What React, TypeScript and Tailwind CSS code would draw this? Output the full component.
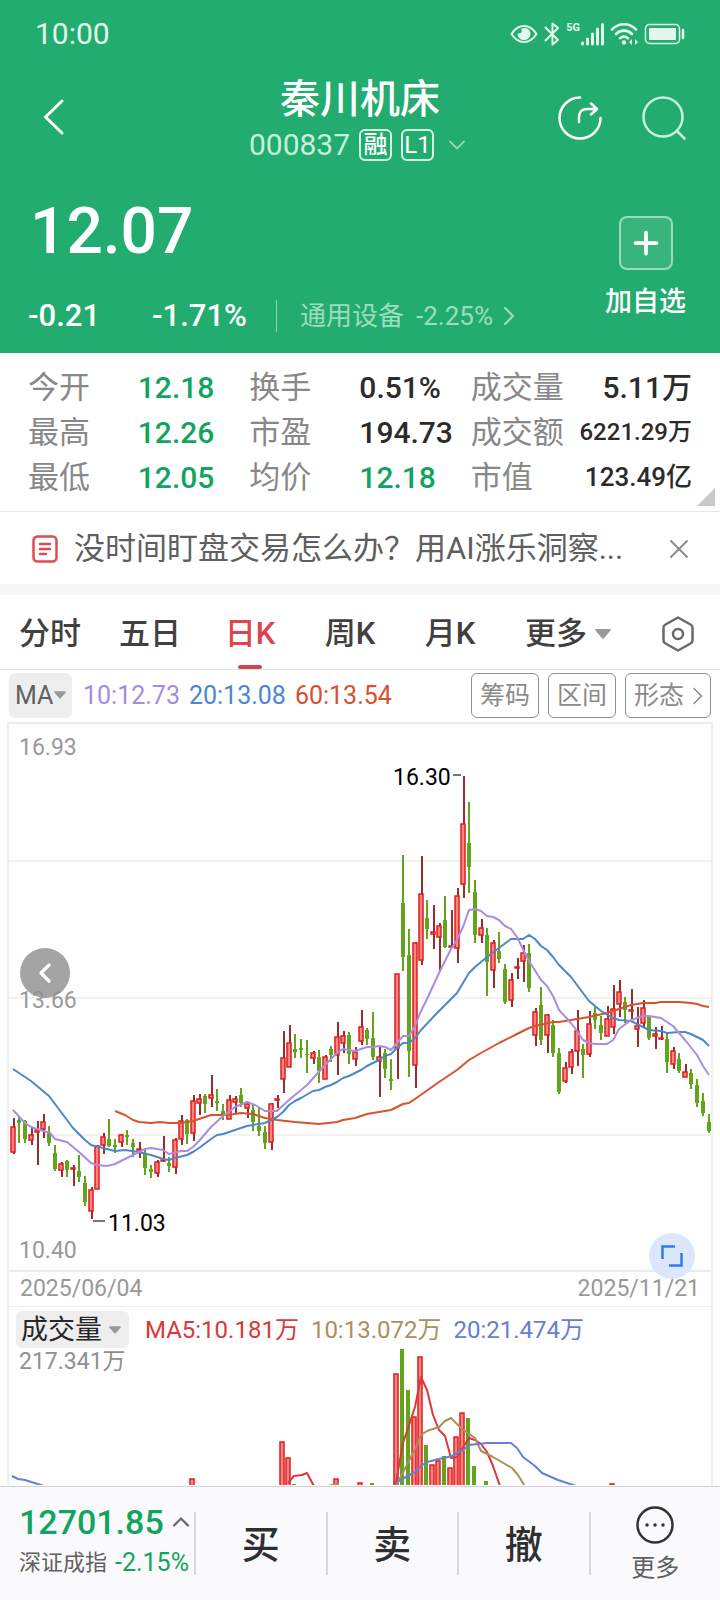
import { ChevronDown, ChevronLeft, ChevronRight, ChevronUp, Plus, X } from 'lucide-react';

type Candle = ['R' | 'G', number, number, number, number];

// 方向, 最高, 实体上沿, 实体下沿, 最低
const CANDLES: Candle[] = [
  ['R', 394, 403, 428, 430], ['G', 393, 396, 399, 419], ['G', 396, 397, 415, 419], ['R', 403, 411, 416, 421],
  ['R', 397, 406, 408, 441], ['R', 390, 398, 405, 414], ['G', 402, 408, 419, 422], ['G', 421, 429, 445, 447],
  ['R', 438, 440, 446, 453], ['G', 436, 437, 446, 453], ['R', 441, 444, 445, 462], ['G', 431, 447, 453, 458],
  ['G', 452, 459, 478, 482], ['R', 463, 466, 487, 495], ['R', 421, 422, 465, 465], ['R', 409, 413, 421, 430],
  ['G', 395, 415, 422, 423], ['G', 415, 421, 423, 429], ['R', 410, 411, 418, 423], ['G', 406, 411, 413, 421],
  ['G', 415, 419, 423, 433], ['R', 418, 425, 426, 434], ['G', 424, 429, 444, 451], ['G', 441, 445, 448, 454],
  ['R', 436, 438, 449, 453], ['R', 412, 436, 437, 438], ['G', 433, 439, 442, 448], ['R', 414, 416, 443, 450],
  ['R', 391, 397, 415, 421], ['G', 395, 396, 410, 420], ['R', 371, 377, 409, 417], ['R', 370, 375, 379, 391],
  ['G', 370, 372, 380, 389], ['R', 351, 371, 374, 383], ['G', 365, 377, 379, 387], ['G', 380, 387, 390, 396],
  ['R', 371, 376, 395, 395], ['R', 372, 375, 378, 389], ['G', 364, 371, 379, 383], ['R', 379, 380, 384, 394],
  ['G', 380, 386, 398, 407], ['G', 383, 402, 407, 412], ['G', 402, 408, 419, 425], ['R', 379, 380, 418, 426],
  ['R', 371, 375, 376, 384], ['R', 307, 334, 355, 369], ['R', 301, 319, 343, 343], ['G', 310, 325, 328, 334],
  ['G', 315, 324, 326, 334], ['G', 316, 330, 331, 349], ['R', 327, 329, 334, 340], ['G', 326, 333, 347, 359],
  ['R', 331, 333, 355, 355], ['G', 322, 325, 331, 338], ['R', 298, 313, 331, 351], ['R', 307, 312, 319, 329],
  ['G', 308, 311, 330, 340], ['R', 323, 328, 335, 342], ['R', 286, 303, 317, 321], ['G', 304, 306, 315, 321],
  ['G', 288, 314, 333, 336], ['R', 322, 333, 337, 373], ['G', 325, 329, 345, 354], ['G', 335, 355, 357, 366],
  ['R', 250, 250, 324, 355], ['G', 131, 179, 233, 247], ['G', 205, 231, 327, 353], ['R', 218, 219, 341, 364],
  ['R', 132, 170, 236, 241], ['G', 176, 194, 205, 215], ['R', 181, 208, 210, 225], ['R', 199, 202, 213, 248],
  ['G', 172, 196, 223, 224], ['R', 186, 222, 223, 223], ['R', 164, 172, 224, 239], ['R', 52, 100, 160, 174],
  ['G', 78, 119, 143, 169], ['G', 156, 168, 211, 219], ['R', 195, 204, 211, 219], ['G', 204, 211, 238, 272],
  ['R', 216, 219, 246, 264], ['G', 208, 227, 235, 239], ['G', 240, 245, 278, 280], ['R', 249, 256, 276, 283],
  ['R', 234, 243, 244, 255], ['R', 221, 229, 237, 258], ['G', 220, 229, 264, 268], ['R', 284, 288, 311, 322],
  ['G', 263, 281, 316, 321], ['R', 290, 291, 311, 329], ['G', 296, 301, 329, 333], ['G', 324, 329, 368, 370],
  ['R', 338, 344, 357, 359], ['R', 325, 328, 343, 350], ['R', 286, 307, 327, 342], ['G', 320, 325, 331, 354],
  ['R', 287, 300, 330, 333], ['G', 283, 289, 296, 305], ['G', 292, 301, 309, 316], ['R', 282, 295, 312, 312],
  ['R', 261, 285, 303, 310], ['R', 256, 268, 280, 293], ['G', 273, 278, 286, 299], ['R', 265, 286, 287, 295],
  ['R', 283, 302, 305, 323], ['R', 276, 284, 299, 303], ['G', 291, 293, 314, 316], ['R', 303, 310, 312, 325],
  ['R', 302, 314, 315, 316], ['G', 309, 315, 338, 349], ['R', 323, 327, 340, 345], ['G', 329, 335, 347, 349],
  ['R', 340, 348, 353, 353], ['G', 345, 349, 360, 365], ['G', 355, 361, 379, 383], ['G', 369, 377, 389, 392],
  ['G', 390, 398, 407, 409],
];

const MA10 =
  '13,386 25,399 31,403 37,405 50,409 55,415 67,418 79,428 91,439 97,441 107,442 115,440 127,434 139,428 145,425 151,424 163,426 169,430 181,427 187,427 193,423 199,417 211,403 223,392 235,383 247,378 255,381 265,387 277,387 289,376 307,361 325,341 337,329 343,325 355,327 367,323 373,323 379,322 385,323 391,326 403,312 409,312 415,302 421,287 427,275 439,249 451,225 457,216 463,203 469,186 475,185 481,187 487,192 493,193 499,196 505,202 511,205 517,213 523,225 529,237 541,256 547,262 553,272 559,286 571,299 577,307 583,316 589,319 595,320 607,320 613,316 619,305 631,296 643,292 649,292 661,294 673,302 685,316 697,331 703,342 709,351';
const MA20 =
  '13,345 31,357 49,372 67,396 73,404 85,416 91,421 103,424 115,427 125,426 139,428 151,431 163,435 169,436 175,434 187,431 193,428 199,424 211,415 217,411 223,410 235,406 247,402 265,399 271,396 277,393 283,388 289,381 295,377 301,374 313,367 319,366 325,363 331,361 337,358 343,354 349,352 361,346 367,342 379,336 385,332 391,330 397,324 403,319 409,319 415,314 421,306 439,287 451,275 457,269 463,259 469,249 475,243 487,233 499,224 511,215 523,215 529,211 535,215 541,222 547,226 553,233 559,241 571,253 577,261 583,269 589,277 601,287 613,294 619,296 631,297 637,300 649,306 661,307 667,309 679,308 685,308 691,310 703,316 709,322';
const MA60 =
  '115,387 125,391 133,396 139,398 151,399 160,398 169,399 181,399 193,397 211,391 228,391 241,389 253,390 265,394 277,396 295,398 319,400 337,398 343,396 355,394 367,390 391,386 403,380 409,379 415,375 439,358 457,346 469,336 481,329 499,319 517,310 529,304 535,302 553,298 559,298 577,295 589,293 607,289 619,285 631,281 643,279 655,279 661,278 679,278 691,279 697,280 703,282 709,283';

// 序号, 方向, 柱顶
const VOLUMES: [number, 'R' | 'G', number][] = [
  [30, 'R', 131], [45, 'R', 94], [46, 'R', 110], [47, 'G', 136], [54, 'R', 131], [58, 'R', 135], [60, 'G', 135],
  [64, 'R', 26], [65, 'G', 1], [66, 'G', 42], [67, 'R', 69], [68, 'R', 9], [69, 'G', 97], [70, 'R', 117],
  [71, 'R', 113], [72, 'G', 108], [73, 'R', 120], [74, 'R', 89], [75, 'R', 65], [76, 'G', 70], [77, 'G', 118],
  [79, 'G', 133], [100, 'R', 136],
];

const VOL_LINES = [
  { color: '#d63a3a', points: '288,135 294,128 302,127 307,125 315,140' },
  { color: '#d63a3a', points: '395,140 403,95 415,59 421,29 427,42 433,67 439,82 445,88 451,110 457,109 469,90 475,92 481,96 487,104 493,118 500,138 501,142' },
  { color: '#ad8f5c', points: '318,140 337,136 342,140' },
  { color: '#ad8f5c', points: '396,138 415,101 421,87 427,83 439,79 445,73 451,70 462,81 475,90 481,103 493,109 512,120 518,127 526,140' },
  { color: '#6480d2', points: '12,128 18,131 25,132 44,138 48,140' },
  { color: '#6480d2', points: '396,135 404,130 415,124 421,118 427,114 439,111 452,108 463,102 469,97 487,95 511,95 517,100 523,109 535,118 542,125 558,132 576,138 580,140' },
];

const xOf = (i: number) => 13 + i * 6;

function StatusBar() {
  return (
    <div className="flex h-[68px] items-center justify-between pl-[35px] pr-[34px] text-[#e3f7ed]">
      <span className="text-[30px] leading-9">10:00</span>
      <div className="flex items-center gap-[6px]">
        <svg className="h-6 w-7" viewBox="0 0 28 24" fill="none" stroke="currentColor" strokeWidth="2">
          <path d="M1.5 12C5 6.500 9 4 14 4s9 2.500 12.500 8C23 17.500 19 20 14 20S5 17.500 1.500 12z" />
          <path d="M11 7.500c1.200 1.500 1 3-.5 3.500-1.300.4-2.500 0-3 1 0 3.500 3 6 6.500 6s6.500-2.600 6.500-6-2.700-6-6-6c-1.500 0-2.700.5-3.500 1.500z" fill="currentColor" stroke="none" />
        </svg>
        <svg className="h-6 w-4" viewBox="0 0 16 24" fill="none" stroke="currentColor" strokeWidth="2">
          <path d="M1.500 5.500l12.500 12.500L8.500 22.500v-21l5.500 4.500L1.500 18.500" strokeLinejoin="round" strokeLinecap="round" />
        </svg>
        <div className="flex">
          <span className="text-[11px] leading-3 font-bold">5G</span>
          <svg className="h-6 w-6" viewBox="0 0 24 24" stroke="currentColor" strokeWidth="3" strokeLinecap="round">
            <path d="M2.500 21v1M7.500 17v5M12.500 12v10M17.500 7v15M22.500 2.500v19.500" />
          </svg>
        </div>
        <svg className="h-6 w-7" viewBox="0 0 28 24" fill="none" stroke="currentColor" strokeWidth="2.600" strokeLinecap="round">
          <path d="M2 7.500C8.500 0.500 19.500 0.500 26 7.500M6 12c4.500-4.500 11.500-4.500 16 0M10 16.200c2.500-2 5.500-2 8 0" />
          <circle cx="14" cy="20.500" r="2.200" fill="currentColor" stroke="none" />
          <path d="M19 20l3-3v6zM28 20l-3-3v6z" fill="currentColor" stroke="none" />
        </svg>
        <svg className="h-6 w-[42px]" viewBox="0 0 42 24" fill="none" stroke="currentColor">
          <rect x="1.500" y="2.500" width="34" height="19" rx="4" strokeWidth="1.500" />
          <rect x="5" y="6" width="27" height="12" rx="1" fill="currentColor" stroke="none" />
          <path d="M39 8v8" strokeWidth="2.500" strokeLinecap="round" />
        </svg>
      </div>
    </div>
  );
}

function Header() {
  return (
    <header className="bg-[#22ac6f] text-white">
      <StatusBar />
      <div className="grid grid-cols-[1fr_auto_1fr] items-center py-[7px] pl-[34px] pr-[34px]">
        <button aria-label="返回" className="justify-self-start">
          <svg className="h-10 w-10" viewBox="0 0 40 40" fill="none" stroke="currentColor" strokeWidth="3">
            <path d="M28 3L11.500 19 28 35" strokeLinecap="round" strokeLinejoin="round" />
          </svg>
        </button>
        <div className="flex flex-col items-center gap-1">
          <h1 className="text-[40px] leading-[50px] font-medium">秦川机床</h1>
          <button className="flex h-8 items-center gap-[9px] text-[#c5f0dc]">
            <span className="text-[30px] leading-8">000837</span>
            <span className="flex h-8 w-[33px] items-center justify-center rounded-md border-2 border-[#d5f5e5] text-2xl leading-7 font-medium text-white">
              融
            </span>
            <span className="flex h-8 w-[33px] items-center justify-center rounded-md border-2 border-[#d5f5e5] text-2xl leading-7 text-white">
              L1
            </span>
            <ChevronDown className="h-7 w-7 text-[#a3dcc0]" strokeWidth={1.5} />
          </button>
        </div>
        <div className="flex items-center gap-10 justify-self-end">
          <button aria-label="分享">
            <svg className="h-11 w-11" viewBox="0 0 44 44" fill="none" stroke="currentColor" strokeWidth="2.500" strokeLinecap="round" strokeLinejoin="round">
              <path d="M22 1.500A20.500 20.500 0 1 0 42.500 22" />
              <path d="M21 26v-5c0-5 3-8 8-8h9M33 7.500l6 5.500-6 5.500" />
            </svg>
          </button>
          <button aria-label="搜索">
            <svg className="h-11 w-11" viewBox="0 0 44 44" fill="none" stroke="#c9f1df" strokeWidth="2.500" strokeLinecap="round">
              <circle cx="21" cy="21" r="19.500" />
              <path d="M35.500 35.500L42.500 42.500" />
            </svg>
          </button>
        </div>
      </div>
      <div className="flex items-start justify-between pt-7 pr-[34px] pb-[21px] pl-7">
        <div>
          <div className="pl-[2px] text-[64px] leading-[72px] font-medium">12.07</div>
          <div className="mt-8 flex h-8 items-center text-[31px] leading-8">
            <span className="w-[124px] font-medium">-0.21</span>
            <span className="w-[124px] font-medium">-1.71%</span>
            <button className="flex items-center gap-3 border-l border-white/50 pl-[23px] text-[26px] leading-8 text-[#9fdcbd]">
              <span>通用设备</span>
              <span className="flex items-center">
                -2.25%
                <ChevronRight className="h-8 w-8" strokeWidth={1.5} />
              </span>
            </button>
          </div>
        </div>
        <button className="mt-5 flex flex-col items-center gap-[14px]">
          <span className="flex h-[54px] w-[54px] items-center justify-center rounded-lg border-2 border-white/50 bg-white/10">
            <Plus className="h-9 w-9" strokeWidth={2.500} />
          </span>
          <span className="text-[27px] leading-9 font-medium">加自选</span>
        </button>
      </div>
    </header>
  );
}

function Quotes() {
  return (
    <dl className="relative grid grid-cols-3 border-b border-[#e6e6e6] px-7 pt-3 pb-[11px] text-[30px] leading-[45px] text-[#2b2b2b]">
      <Quote label="今开" className="justify-between pr-[35px] text-[#12a45f]" value="12.18" />
      <Quote label="换手" labelClass="w-[110px]" value="0.51%" />
      <Quote label="成交量" className="justify-between" value="5.11万" />
      <Quote label="最高" className="justify-between pr-[35px] text-[#12a45f]" value="12.26" />
      <Quote label="市盈" labelClass="w-[110px]" value="194.73" />
      <Quote label="成交额" className="justify-between" valueClass="text-2xl leading-[45px]" value="6221.29万" />
      <Quote label="最低" className="justify-between pr-[35px] text-[#12a45f]" value="12.05" />
      <Quote label="均价" labelClass="w-[110px]" className="text-[#12a45f]" value="12.18" />
      <Quote label="市值" className="justify-between" valueClass="text-[26px]" value="123.49亿" />
      <svg className="absolute right-[5px] bottom-[5px] h-[18px] w-[18px]" viewBox="0 0 18 18">
        <path d="M18 0v18H0z" fill="#c9c9c9" />
      </svg>
    </dl>
  );
}

interface QuoteProps {
  label: string;
  value: string;
  className?: string;
  labelClass?: string;
  valueClass?: string;
}

function Quote({ label, value, className = '', labelClass = '', valueClass = '' }: QuoteProps) {
  return (
    <div className={`flex h-[45px] items-center ${className}`}>
      <dt className={`shrink-0 text-[31px] text-[#888888] ${labelClass}`}>{label}</dt>
      <dd className={`font-medium whitespace-nowrap ${valueClass}`}>{value}</dd>
    </div>
  );
}

function News() {
  return (
    <div className="flex h-[72px] items-center pt-[2px] pr-[25px] pl-8">
      <svg className="h-7 w-[26px] shrink-0" viewBox="0 0 26 28" fill="none" stroke="#e04b52" strokeWidth="2.500" strokeLinecap="round">
        <rect x="1.500" y="1.500" width="23" height="25" rx="4" />
        <path d="M8 9h10M8 14h10M8 19h6" />
      </svg>
      <a href="#news" className="ml-4 flex-1 text-[31px] leading-10 whitespace-nowrap text-[#5f5f5f]">
        没时间盯盘交易怎么办？用AI涨乐洞察...
      </a>
      <button aria-label="关闭">
        <X className="h-8 w-8 text-[#8a8a8a]" strokeWidth={1.500} />
      </button>
    </div>
  );
}

function Triangle({ className }: { className: string }) {
  return (
    <svg className={className} viewBox="0 0 16 10" fill="#999999">
      <path d="M1 0h14q1.500 0 .5 1.500L9 9.300q-1 1-2 0L.5 1.500Q-.5 0 1 0z" />
    </svg>
  );
}

function Tabs() {
  return (
    <nav className="grid h-[75px] grid-cols-[repeat(5,100fr)_136fr_84fr] border-b border-[#e2e2e2] pt-[3px] text-[31px] leading-10 font-medium text-[#404040]">
      <button>分时</button>
      <button>五日</button>
      <button className="relative text-[#e0434b]">
        日K
        <span className="absolute bottom-0 left-1/2 h-1 w-6 -translate-x-1/2 rounded-full bg-[#d9434d]" />
      </button>
      <button>周K</button>
      <button>月K</button>
      <button className="flex items-center justify-center gap-2">
        更多
        <Triangle className="h-[10px] w-4" />
      </button>
      <button aria-label="设置" className="flex items-center justify-center">
        <svg className="h-9 w-9" viewBox="0 0 36 36" fill="none" stroke="#6a6a6a" strokeWidth="2.500" strokeLinejoin="round">
          <path d="M18 1.500l12.500 7q2 1 2 3v13q0 2-2 3L18 34.500l-12.500-7q-2-1-2-3v-13q0-2 2-3z" />
          <circle cx="18" cy="18" r="5" />
        </svg>
      </button>
    </nav>
  );
}

function Indicators() {
  return (
    <div className="flex items-center justify-between pt-[3px] pr-[9px] pb-1 pl-[9px] text-[25px] leading-8">
      <div className="flex items-center gap-[9px]">
        <div className="relative mr-[2px] h-[45px] w-[63px]">
          <select aria-label="主图指标" className="h-full w-full appearance-none rounded-md bg-[#eeeeee] pl-[6px] text-[25px] text-[#606060]">
            <option>MA</option>
          </select>
          <Triangle className="pointer-events-none absolute top-[18px] right-[6px] h-2 w-3" />
        </div>
        <span className="text-[#a78be0]">10:12.73</span>
        <span className="text-[#4b86cf]">20:13.08</span>
        <span className="text-[#d8502f]">60:13.54</span>
      </div>
      <div className="flex gap-[9px] text-[#8b8b8b]">
        <button className="h-[45px] w-[68px] rounded-md border border-[#8f8f8f]">筹码</button>
        <button className="h-[45px] w-[68px] rounded-md border border-[#8f8f8f]">区间</button>
        <button className="flex h-[45px] w-[86px] items-center rounded-md border border-[#8f8f8f] pl-2 whitespace-nowrap">
          <span className="shrink-0">形态</span>
          <svg className="ml-2 h-[18px] w-[11px] shrink-0" viewBox="0 0 11 18" fill="none" stroke="currentColor" strokeWidth="1.500">
            <path d="M1.500 1L9.500 9l-8 8" />
          </svg>
        </button>
      </div>
    </div>
  );
}

function PriceChart() {
  return (
    <div className="relative border-y-2 border-[#ececec]">
      <svg className="block w-full" viewBox="9 0 702 546" fill="none">
        {[137, 274, 411].map((y) => (
          <path key={y} d={`M9 ${y}h702`} stroke="#f1f1f1" strokeWidth="2" />
        ))}
        {CANDLES.map(([dir, high, top, bottom, low], i) => {
          const x = xOf(i);
          const h = Math.max(bottom - top, 1);
          return dir === 'R' ? (
            <g key={i}>
              <path d={`M${x + 1} ${high}V${low}`} stroke="#932f2f" strokeWidth="2" />
              <rect x={x - 2} y={top} width="4" height={h} fill="#f98585" stroke="#e01c1c" strokeWidth="1.500" />
            </g>
          ) : (
            <g key={i}>
              <path d={`M${x} ${high}V${low}`} stroke="#62a41c" strokeWidth="2" />
              <rect x={x - 2} y={top} width="4" height={h} fill="#62a41c" />
            </g>
          );
        })}
        <g strokeWidth="2" strokeLinejoin="round">
          <polyline points={MA60} stroke="#d6532f" />
          <polyline points={MA20} stroke="#4d87cb" />
          <polyline points={MA10} stroke="#a98de0" />
        </g>
        <path d="M453 51h8M93 497h12" stroke="#777777" strokeWidth="2" />
        <g fontSize="23" fill="#000000">
          <text x="393" y="61">16.30</text>
          <text x="108" y="507">11.03</text>
        </g>
        <g fontSize="23" fill="#999999">
          <text x="19" y="31">16.93</text>
          <text x="19" y="284">13.66</text>
          <text x="19" y="534">10.40</text>
        </g>
      </svg>
      <button aria-label="更早" className="absolute top-[224px] left-[11px] flex h-[50px] w-[50px] items-center justify-center rounded-full bg-[#8d8d8d]/80 text-white">
        <ChevronLeft className="h-8 w-8" strokeWidth={2.500} />
      </button>
      <button aria-label="全屏" className="absolute right-4 -bottom-[9px] z-10 flex h-[46px] w-[46px] items-center justify-center rounded-full bg-[#dbe7fc]">
        <svg className="h-6 w-6" viewBox="0 0 24 24" fill="none" stroke="#2f7de6" strokeWidth="2.500">
          <path d="M2.500 15V2.500H15M21.500 9v12.500H9" />
        </svg>
      </button>
    </div>
  );
}

function VolumeChart() {
  return (
    <>
      <div className="flex items-center gap-3 pt-1 pl-[7px] text-2xl leading-8">
        <div className="relative mr-1 h-[37px] w-[113px]">
          <select aria-label="副图指标" className="h-full w-full appearance-none rounded-md bg-[#eeeeee] pl-[5px] text-[27px] text-[#262626]">
            <option>成交量</option>
          </select>
          <Triangle className="pointer-events-none absolute top-[15px] right-2 h-2 w-3" />
        </div>
        <span className="text-[#d63a3a]">MA5:10.181万</span>
        <span className="text-[#ad8f5c]">10:13.072万</span>
        <span className="text-[#6480d2]">20:21.474万</span>
      </div>
      <svg className="block w-full" viewBox="9 0 702 137" fill="none">
        <text x="19" y="21" fontSize="23" fill="#8f8f8f">217.341万</text>
        {VOLUMES.map(([i, dir, top]) =>
          dir === 'R' ? (
            <rect key={i} x={xOf(i) - 3} y={top} width="4" height="150" fill="#f98585" stroke="#e01c1c" strokeWidth="1.500" />
          ) : (
            <rect key={i} x={xOf(i) - 3} y={top} width="4" height="150" fill="#62a41c" />
          ),
        )}
        {VOL_LINES.map((line) => (
          <polyline key={line.points} points={line.points} stroke={line.color} strokeWidth="2" strokeLinejoin="round" />
        ))}
      </svg>
    </>
  );
}

function BottomBar() {
  return (
    <footer className="flex h-[114px] border-t border-[#d2d2d4] bg-[#fafafc] text-[#2f2f2f]">
      <button className="flex w-[194px] shrink-0 flex-col items-start pt-3 pl-[19px] text-left">
        <span className="flex items-center gap-[3px] text-[34px] leading-[46px] font-medium text-[#12a45f]">
          12701.85
          <ChevronUp className="h-7 w-7 text-[#6a6a6a]" strokeWidth={2} />
        </span>
        <span className="flex items-center gap-[8px] text-[25px] leading-9 whitespace-nowrap text-[#12a45f]">
          <span className="text-[22px] text-[#606060]">深证成指</span>-2.15%
        </span>
      </button>
      <div className="grid flex-1 grid-cols-4 text-[38px] leading-[44px] font-medium">
        {['买', '卖', '撤'].map((label) => (
          <button key={label} className="my-[25px] border-l-2 border-[#d9d9db] pt-[2px]">
            {label}
          </button>
        ))}
        <div className="my-[25px] flex border-l-2 border-[#d9d9db]">
          <button className="-my-3 flex flex-1 flex-col items-center gap-[7px] text-2xl leading-8 font-normal text-[#606060]">
            <svg className="mt-[5px] h-10 w-10" viewBox="0 0 40 40" fill="none" stroke="#333333" strokeWidth="2.500">
              <circle cx="20" cy="20" r="17.500" />
              <path d="M12 20h0.010M20 20h0.010M28 20h0.010" strokeWidth="3.500" strokeLinecap="round" />
            </svg>
            更多
          </button>
        </div>
      </div>
    </footer>
  );
}

export default function App() {
  return (
    <div className="flex min-h-screen flex-col bg-white font-['Roboto','Noto_Sans_CJK_SC',sans-serif]">
      <Header />
      <Quotes />
      <News />
      <div className="h-[11px] bg-[#f7f7f7]" />
      <Tabs />
      <Indicators />
      <main className="mx-[7px] flex-1 border-x-2 border-[#eeeeee] bg-[#fefefe]">
        <PriceChart />
        <div className="flex h-[35px] items-center justify-between border-b border-[#eeeeee] px-[11px] text-[23px] leading-8 text-[#999999]">
          <span>2025/06/04</span>
          <span>2025/11/21</span>
        </div>
        <VolumeChart />
      </main>
      <BottomBar />
    </div>
  );
}
